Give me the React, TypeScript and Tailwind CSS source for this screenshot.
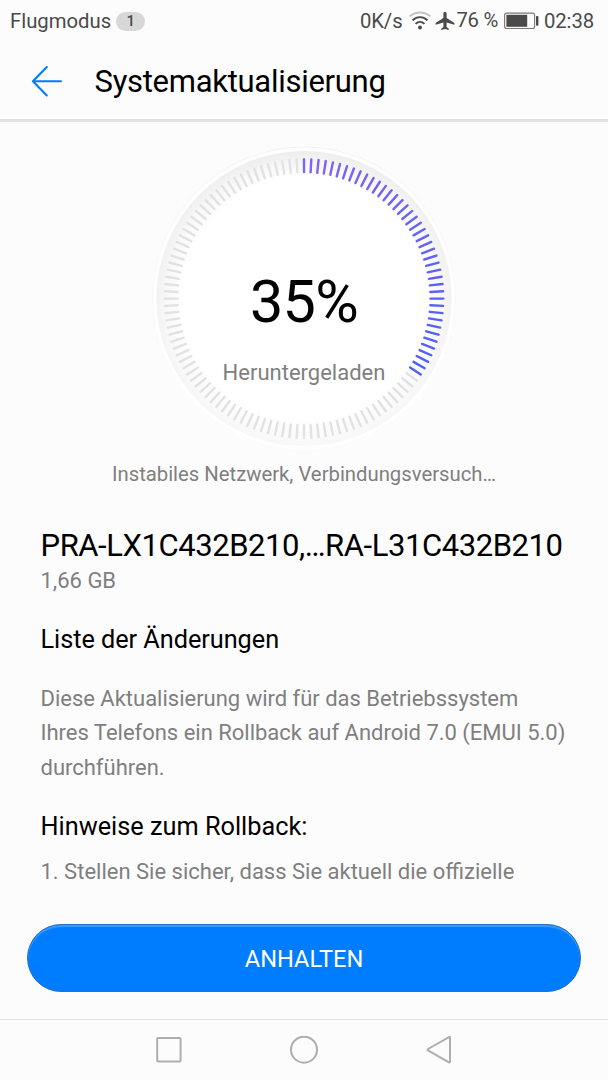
import React from "react";
import clsx from "clsx";

const TICK_COUNT = 120;
const ACTIVE_TICKS = 42;

const TICKS = Array.from({ length: TICK_COUNT }, (_, i) => i);

// purple at the top, turning blue along the dial
const tickColor = (i: number) => {
  if (i >= ACTIVE_TICKS) return "#e2e2e2";
  const t = i / (ACTIVE_TICKS - 1);
  const r = Math.round(128 - 50 * t);
  const g = Math.round(100 - 4 * t);
  const b = Math.round(246 - 2 * t);
  return `rgb(${r},${g},${b})`;
};

const WifiIcon = () => (
  <svg width="22" height="20" viewBox="0 0 22 20" fill="none" strokeWidth="1.9">
    <path d="M.6 5.4C6.6 .2 15.4 .2 21.4 5.4" stroke="#c4c4c4" />
    <path d="M3.5 9.3C8 5 14 5 18.5 9.3" stroke="#4a4a4a" />
    <path d="M6.6 12.9C9.2 10.2 12.8 10.2 15.4 12.9" stroke="#4a4a4a" />
    <circle cx="11" cy="16.4" r="2" fill="#4a4a4a" />
  </svg>
);

const PlaneIcon = () => (
  <svg width="20" height="20" viewBox="0 0 20 20" fill="#4a4a4a">
    <path d="M10 .7C9 .7 8.4 1.6 8.4 2.8V7L.6 12V13.8L8.4 11.4V16L6.2 17.8V19L10 18L13.8 19V17.8L11.6 16V11.4L19.4 13.8V12L11.6 7V2.8C11.6 1.6 11 .7 10 .7Z" />
  </svg>
);

const BatteryIcon = () => (
  <svg width="35" height="18" viewBox="0 0 35 18" fill="none">
    <rect x=".6" y="1.1" width="30" height="15.4" rx="2" stroke="#777" strokeWidth="1.1" />
    <rect x="2.4" y="2.8" width="20.8" height="12" fill="#4a4a4a" />
    <rect x="32" y="4" width="2.4" height="9.8" rx=".8" fill="#4a4a4a" />
  </svg>
);

const StatusBar = () => (
  <div className="flex h-[42px] items-center justify-between pl-[10px] pr-[14px] text-[20.3px] text-[#4a4a4a]">
    <div className="flex items-center gap-[5px]">
      <span>Flugmodus</span>
      <span className="flex h-[19px] w-[29px] items-center justify-center rounded-full bg-[#d8d8d8] text-[15px] font-medium">
        1
      </span>
    </div>
    <div className="flex items-center">
      <span className="mr-[6px] tracking-[-0.1px]">0K/s</span>
      <WifiIcon />
      <span className="ml-[4px] mr-[2px]">
        <PlaneIcon />
      </span>
      <span className="mr-[6px] pb-[2px] tracking-[-0.3px]">76 %</span>
      <span className="mr-[5px] pb-[1px]">
        <BatteryIcon />
      </span>
      <span className="tracking-[-0.1px]">02:38</span>
    </div>
  </div>
);

const Header = () => (
  <header className="flex h-20 items-center border-b-[3px] border-[#e2e2e2] pl-[31px]">
    <svg
      width="32"
      height="32"
      viewBox="0 0 32 32"
      fill="none"
      stroke="#007dff"
      strokeWidth="2.1"
      strokeLinecap="round"
      strokeLinejoin="round"
    >
      <path d="M30 16.2H2M15.8 2L1.9 16.2L15.8 30.4" />
    </svg>
    <h1 className="ml-[31.5px] pt-[4px] text-[31px] tracking-[-0.28px] text-black">
      Systemaktualisierung
    </h1>
  </header>
);

const ProgressDial = () => (
  <div className="relative mx-auto mt-[24px] h-[306px] w-[306px]">
    <svg width="306" height="306" viewBox="-153 -152.6 306 306">
      <defs>
        <linearGradient id="rim" x1="0" y1="0" x2="0" y2="1">
          <stop offset="0" stopColor="#ededed" />
          <stop offset="1" stopColor="#f8f8f8" />
        </linearGradient>
        <radialGradient id="face" gradientUnits="userSpaceOnUse" cx="0" cy="0" r="147.5">
          <stop offset=".82" stopColor="#fff" />
          <stop offset=".92" stopColor="#fff" stopOpacity=".55" />
          <stop offset="1" stopColor="#fff" stopOpacity="0" />
        </radialGradient>
        <linearGradient id="edge" x1="0" y1="0" x2="0" y2="1">
          <stop offset="0" stopColor="#f3f3f3" />
          <stop offset=".8" stopColor="#fbfbfb" />
        </linearGradient>
      </defs>
      <circle r="151.6" fill="#fefefe" stroke="url(#edge)" strokeWidth="1" />
      <circle r="147.5" fill="url(#rim)" />
      <circle r="147.5" fill="url(#face)" />
      {TICKS.map((i) => (
        <line
          key={i}
          y1={-139.3}
          y2={-126.5}
          stroke={tickColor(i)}
          strokeWidth="2.4"
          strokeLinecap="round"
          transform={`rotate(${i * 3})`}
        />
      ))}
    </svg>
    <div className="absolute inset-0 flex flex-col items-center">
      <p className="mt-[120.5px] text-[59.4px] leading-[70px] tracking-[-0.7px] text-black">35%</p>
      <p className="mt-[22px] text-[22px] leading-[28px] text-[#7f7f7f]">Heruntergeladen</p>
    </div>
  </div>
);

const NavBar = () => (
  <nav className="flex h-[61px] items-center justify-center gap-[107px] border-t border-[#e0e0e0]">
    <svg width="28" height="28" viewBox="0 0 28 28" fill="none" stroke="#aeaeae" strokeWidth="2">
      <rect x="2.2" y="2" width="23.4" height="23.4" rx="1" />
    </svg>
    <svg width="28" height="28" viewBox="0 0 28 28" fill="none" stroke="#aeaeae" strokeWidth="2">
      <circle cx="14" cy="13.7" r="13" />
    </svg>
    <svg
      width="28"
      height="28"
      viewBox="0 0 28 28"
      fill="none"
      stroke="#aeaeae"
      strokeWidth="2"
      strokeLinejoin="round"
    >
      <path d="M25 1.6Q25 .6 24 1.1L3 13Q2 13.7 3 14.4L24 26.3Q25 26.8 25 25.8Z" />
    </svg>
  </nav>
);

const App = () => {
  return (
    <div
      className={clsx(
        "flex h-[1080px] w-[608px] flex-col overflow-hidden bg-[#fcfcfc] font-['Roboto',sans-serif] select-none"
      )}
    >
      <StatusBar />
      <Header />
      <ProgressDial />
      <p className="mt-[8px] text-center text-[20.3px] leading-[28px] text-[#7f7f7f]">
        Instabiles Netzwerk, Verbindungsversuch…
      </p>
      <main className="min-h-0 flex-1 overflow-hidden pl-[40.5px] whitespace-nowrap text-[#7f7f7f]">
        <h2 className="mt-[38px] text-[31px] leading-[40px] tracking-[-0.43px] text-black">
          PRA-LX1C432B210,…RA-L31C432B210
        </h2>
        <p className="text-[22px] leading-[30px]">1,66 GB</p>
        <h3 className="mt-[27px] text-[25.3px] leading-[34px] tracking-[-0.05px] text-black">
          Liste der Änderungen
        </h3>
        <p className="mt-[25px] text-[22px] leading-[34.3px] tracking-[-0.01px]">
          Diese Aktualisierung wird für das Betriebssystem
          <br />
          Ihres Telefons ein Rollback auf Android 7.0 (EMUI 5.0)
          <br />
          durchführen.
        </p>
        <h3 className="mt-[25px] text-[25.3px] leading-[34px] text-black">
          Hinweise zum Rollback:
        </h3>
        <p className="mt-[11px] text-[22px] leading-[34px]">
          1. Stellen Sie sicher, dass Sie aktuell die offizielle
        </p>
      </main>
      <div className="px-[27px] pb-[27px]">
        <button className="block h-[68px] w-full rounded-full border border-[#2672c4] bg-[#007dff] pt-[4px] text-[23.6px] text-white shadow-[inset_0_2px_1px_#3c99fb]">
          ANHALTEN
        </button>
      </div>
      <NavBar />
    </div>
  );
};

export default App;
